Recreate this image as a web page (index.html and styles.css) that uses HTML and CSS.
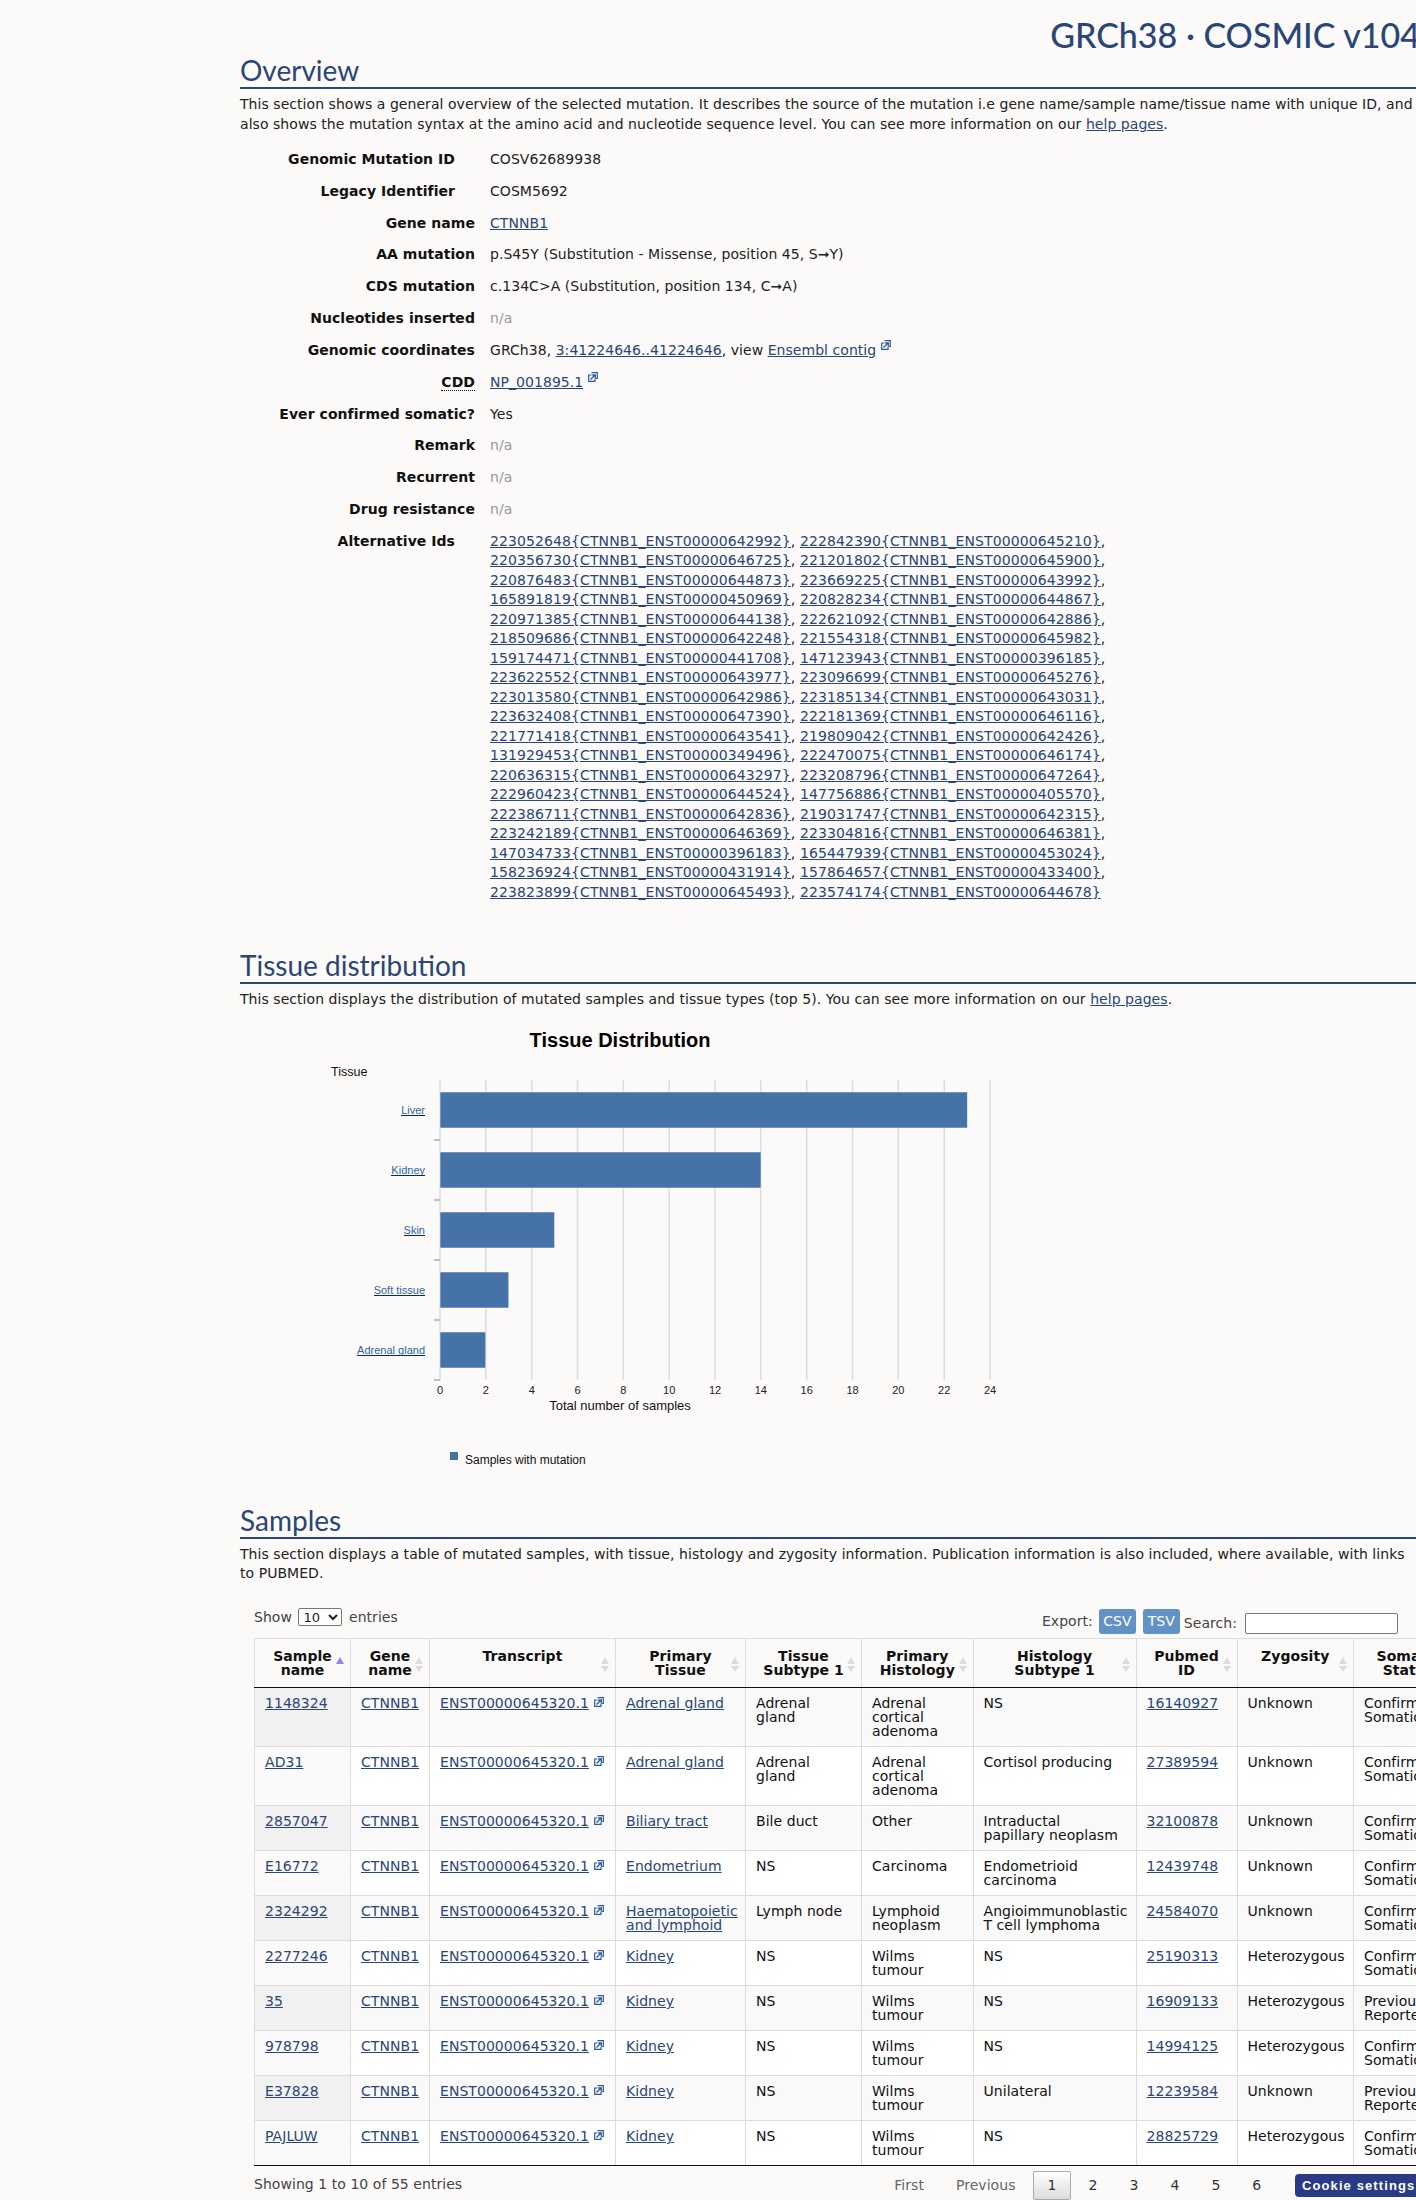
FILE: index.html
```html
<!DOCTYPE html>
<html lang="en">
<head>
<meta charset="utf-8">
<title>CTNNB1 p.S45Y - COSMIC</title>
<link rel="stylesheet" href="styles.css">
</head>
<body>
<svg class="defs" width="0" height="0" aria-hidden="true">
  <symbol id="ext" viewBox="0 0 10 10">
    <path d="M3.500 3H.7v6.300H7V6.500" fill="none" stroke="#2a5a9a" stroke-width="1.200"/>
    <path d="M3.500 .7h5.800v5.800H7.500" fill="none" stroke="#2a5a9a" stroke-width="1.200"/>
    <path d="M2.500 7.500 6.500 3.500M4.300 3h3v3" fill="none" stroke="#2a5a9a" stroke-width="1.300"/>
  </symbol>
</svg>
<main class="page">
  <h1 class="build">GRCh38 · COSMIC v104</h1>

  <section>
    <h2>Overview</h2>
    <p>This section shows a general overview of the selected mutation. It describes the source of the mutation i.e gene name/sample name/tissue name with unique ID, and<br>also shows the mutation syntax at the amino acid and nucleotide sequence level. You can see more information on our <a href="#">help pages</a>.</p>
    <dl class="facts">
      <dt class="inset">Genomic Mutation ID</dt><dd>COSV62689938</dd>
      <dt class="inset">Legacy Identifier</dt><dd>COSM5692</dd>
      <dt>Gene name</dt><dd><a href="#">CTNNB1</a></dd>
      <dt>AA mutation</dt><dd>p.S45Y (Substitution - Missense, position 45, S➞Y)</dd>
      <dt>CDS mutation</dt><dd>c.134C&gt;A (Substitution, position 134, C➞A)</dd>
      <dt>Nucleotides inserted</dt><dd class="na">n/a</dd>
      <dt>Genomic coordinates</dt><dd>GRCh38, <a href="#">3:41224646..41224646</a>, view <a href="#">Ensembl contig</a><svg class="ext up"><use href="#ext"/></svg></dd>
      <dt><abbr class="dotted">CDD</abbr></dt><dd><a href="#">NP_001895.1</a><svg class="ext up"><use href="#ext"/></svg></dd>
      <dt>Ever confirmed somatic?</dt><dd>Yes</dd>
      <dt>Remark</dt><dd class="na">n/a</dd>
      <dt>Recurrent</dt><dd class="na">n/a</dd>
      <dt>Drug resistance</dt><dd class="na">n/a</dd>
      <dt class="inset">Alternative Ids</dt>
      <dd class="alts"><a href="#">223052648{CTNNB1_ENST00000642992}</a>, <a href="#">222842390{CTNNB1_ENST00000645210}</a>, <a href="#">220356730{CTNNB1_ENST00000646725}</a>, <a href="#">221201802{CTNNB1_ENST00000645900}</a>, <a href="#">220876483{CTNNB1_ENST00000644873}</a>, <a href="#">223669225{CTNNB1_ENST00000643992}</a>, <a href="#">165891819{CTNNB1_ENST00000450969}</a>, <a href="#">220828234{CTNNB1_ENST00000644867}</a>, <a href="#">220971385{CTNNB1_ENST00000644138}</a>, <a href="#">222621092{CTNNB1_ENST00000642886}</a>, <a href="#">218509686{CTNNB1_ENST00000642248}</a>, <a href="#">221554318{CTNNB1_ENST00000645982}</a>, <a href="#">159174471{CTNNB1_ENST00000441708}</a>, <a href="#">147123943{CTNNB1_ENST00000396185}</a>, <a href="#">223622552{CTNNB1_ENST00000643977}</a>, <a href="#">223096699{CTNNB1_ENST00000645276}</a>, <a href="#">223013580{CTNNB1_ENST00000642986}</a>, <a href="#">223185134{CTNNB1_ENST00000643031}</a>, <a href="#">223632408{CTNNB1_ENST00000647390}</a>, <a href="#">222181369{CTNNB1_ENST00000646116}</a>, <a href="#">221771418{CTNNB1_ENST00000643541}</a>, <a href="#">219809042{CTNNB1_ENST00000642426}</a>, <a href="#">131929453{CTNNB1_ENST00000349496}</a>, <a href="#">222470075{CTNNB1_ENST00000646174}</a>, <a href="#">220636315{CTNNB1_ENST00000643297}</a>, <a href="#">223208796{CTNNB1_ENST00000647264}</a>, <a href="#">222960423{CTNNB1_ENST00000644524}</a>, <a href="#">147756886{CTNNB1_ENST00000405570}</a>, <a href="#">222386711{CTNNB1_ENST00000642836}</a>, <a href="#">219031747{CTNNB1_ENST00000642315}</a>, <a href="#">223242189{CTNNB1_ENST00000646369}</a>, <a href="#">223304816{CTNNB1_ENST00000646381}</a>, <a href="#">147034733{CTNNB1_ENST00000396183}</a>, <a href="#">165447939{CTNNB1_ENST00000453024}</a>, <a href="#">158236924{CTNNB1_ENST00000431914}</a>, <a href="#">157864657{CTNNB1_ENST00000433400}</a>, <a href="#">223823899{CTNNB1_ENST00000645493}</a>, <a href="#">223574174{CTNNB1_ENST00000644678}</a></dd>
    </dl>
  </section>

  <section class="tissue">
    <h2>Tissue distribution</h2>
    <p>This section displays the distribution of mutated samples and tissue types (top 5). You can see more information on our <a href="#">help pages</a>.</p>
    <svg class="chart" viewBox="0 0 800 470" width="800" height="470">
      <text class="c-title" x="380" y="37" text-anchor="middle">Tissue Distribution</text>
      <text class="c-label" x="91" y="66">Tissue</text>
      <g class="c-grid">
        <path d="M200 70v300M245.800 70v300M291.700 70v300M337.500 70v300M383.300 70v300M429.200 70v300M475 70v300M520.800 70v300M566.700 70v300M612.500 70v300M658.300 70v300M704.200 70v300M750 70v300"/>
      </g>
      <path class="c-tick" d="M194 130h6M194 190h6M194 250h6M194 310h6M194 370h6"/>
      <g class="c-bars">
        <rect x="200" y="82" width="527.400" height="36"/>
        <rect x="200" y="142" width="321" height="36"/>
        <rect x="200" y="202" width="114.600" height="36"/>
        <rect x="200" y="262" width="68.800" height="36"/>
        <rect x="200" y="322" width="45.800" height="36"/>
      </g>
      <g class="c-cat">
        <a href="#"><text x="185" y="104" text-anchor="end">Liver</text></a>
        <a href="#"><text x="185" y="164" text-anchor="end">Kidney</text></a>
        <a href="#"><text x="185" y="224" text-anchor="end">Skin</text></a>
        <a href="#"><text x="185" y="284" text-anchor="end">Soft tissue</text></a>
        <a href="#"><text x="185" y="344" text-anchor="end">Adrenal gland</text></a>
      </g>
      <path class="c-under" d="M161 105.500h24M151 165.500h34M164 225.500h21M134 285.500h51M117 345.500h68"/>
      <g class="c-num" text-anchor="middle">
        <text x="200" y="384">0</text><text x="245.800" y="384">2</text><text x="291.700" y="384">4</text><text x="337.500" y="384">6</text><text x="383.300" y="384">8</text><text x="429.200" y="384">10</text><text x="475" y="384">12</text><text x="520.800" y="384">14</text><text x="566.700" y="384">16</text><text x="612.500" y="384">18</text><text x="658.300" y="384">20</text><text x="704.200" y="384">22</text><text x="750" y="384">24</text>
      </g>
      <text class="c-axis" x="380" y="400" text-anchor="middle">Total number of samples</text>
      <rect class="c-key" x="210" y="442" width="8" height="8"/>
      <text class="c-legend" x="225" y="454">Samples with mutation</text>
    </svg>
  </section>

  <section class="samples">
    <h2>Samples</h2>
    <p>This section displays a table of mutated samples, with tissue, histology and zygosity information. Publication information is also included, where available, with links<br>to PUBMED.</p>
    <div class="dt">
      <div class="dt-top">
        <label class="show">Show <select class="len"><option>10</option><option>25</option><option>50</option></select> entries</label>
        <div class="tools">
          <span class="export">Export:</span>
          <a class="btn" href="#">CSV</a>
          <a class="btn" href="#">TSV</a>
          <label class="search">Search: <input class="find" type="search"></label>
        </div>
      </div>
      <table>
        <colgroup><col class="w1"><col class="w2"><col class="w3"><col class="w4"><col class="w5"><col class="w6"><col class="w7"><col class="w8"><col class="w9"><col class="w10"></colgroup>
        <thead>
          <tr>
            <th class="sorted">Sample<br>name</th><th>Gene<br>name</th><th>Transcript</th><th>Primary<br>Tissue</th><th>Tissue<br>Subtype 1</th><th>Primary<br>Histology</th><th>Histology<br>Subtype 1</th><th>Pubmed<br>ID</th><th>Zygosity</th><th>Somatic<br>Status</th>
          </tr>
        </thead>
        <tbody>
          <tr><td><a href="#">1148324</a></td><td><a href="#">CTNNB1</a></td><td><a href="#">ENST00000645320.1</a><svg class="ext"><use href="#ext"/></svg></td><td><a href="#">Adrenal gland</a></td><td>Adrenal gland</td><td>Adrenal cortical adenoma</td><td>NS</td><td><a href="#">16140927</a></td><td>Unknown</td><td>Confirmed Somatic</td></tr>
          <tr><td><a href="#">AD31</a></td><td><a href="#">CTNNB1</a></td><td><a href="#">ENST00000645320.1</a><svg class="ext"><use href="#ext"/></svg></td><td><a href="#">Adrenal gland</a></td><td>Adrenal gland</td><td>Adrenal cortical adenoma</td><td>Cortisol producing</td><td><a href="#">27389594</a></td><td>Unknown</td><td>Confirmed Somatic</td></tr>
          <tr><td><a href="#">2857047</a></td><td><a href="#">CTNNB1</a></td><td><a href="#">ENST00000645320.1</a><svg class="ext"><use href="#ext"/></svg></td><td><a href="#">Biliary tract</a></td><td>Bile duct</td><td>Other</td><td>Intraductal papillary neoplasm</td><td><a href="#">32100878</a></td><td>Unknown</td><td>Confirmed Somatic</td></tr>
          <tr><td><a href="#">E16772</a></td><td><a href="#">CTNNB1</a></td><td><a href="#">ENST00000645320.1</a><svg class="ext"><use href="#ext"/></svg></td><td><a href="#">Endometrium</a></td><td>NS</td><td>Carcinoma</td><td>Endometrioid carcinoma</td><td><a href="#">12439748</a></td><td>Unknown</td><td>Confirmed Somatic</td></tr>
          <tr><td><a href="#">2324292</a></td><td><a href="#">CTNNB1</a></td><td><a href="#">ENST00000645320.1</a><svg class="ext"><use href="#ext"/></svg></td><td><a href="#">Haematopoietic and lymphoid</a></td><td>Lymph node</td><td>Lymphoid neoplasm</td><td>Angioimmunoblastic T cell lymphoma</td><td><a href="#">24584070</a></td><td>Unknown</td><td>Confirmed Somatic</td></tr>
          <tr><td><a href="#">2277246</a></td><td><a href="#">CTNNB1</a></td><td><a href="#">ENST00000645320.1</a><svg class="ext"><use href="#ext"/></svg></td><td><a href="#">Kidney</a></td><td>NS</td><td>Wilms tumour</td><td>NS</td><td><a href="#">25190313</a></td><td>Heterozygous</td><td>Confirmed Somatic</td></tr>
          <tr><td><a href="#">35</a></td><td><a href="#">CTNNB1</a></td><td><a href="#">ENST00000645320.1</a><svg class="ext"><use href="#ext"/></svg></td><td><a href="#">Kidney</a></td><td>NS</td><td>Wilms tumour</td><td>NS</td><td><a href="#">16909133</a></td><td>Heterozygous</td><td>Previously Reported</td></tr>
          <tr><td><a href="#">978798</a></td><td><a href="#">CTNNB1</a></td><td><a href="#">ENST00000645320.1</a><svg class="ext"><use href="#ext"/></svg></td><td><a href="#">Kidney</a></td><td>NS</td><td>Wilms tumour</td><td>NS</td><td><a href="#">14994125</a></td><td>Heterozygous</td><td>Confirmed Somatic</td></tr>
          <tr><td><a href="#">E37828</a></td><td><a href="#">CTNNB1</a></td><td><a href="#">ENST00000645320.1</a><svg class="ext"><use href="#ext"/></svg></td><td><a href="#">Kidney</a></td><td>NS</td><td>Wilms tumour</td><td>Unilateral</td><td><a href="#">12239584</a></td><td>Unknown</td><td>Previously Reported</td></tr>
          <tr><td><a href="#">PAJLUW</a></td><td><a href="#">CTNNB1</a></td><td><a href="#">ENST00000645320.1</a><svg class="ext"><use href="#ext"/></svg></td><td><a href="#">Kidney</a></td><td>NS</td><td>Wilms tumour</td><td>NS</td><td><a href="#">28825729</a></td><td>Heterozygous</td><td>Confirmed Somatic</td></tr>
        </tbody>
      </table>
      <div class="dt-bottom">
        <div class="info">Showing 1 to 10 of 55 entries</div>
        <nav class="paging">
          <a class="pg off" href="#">First</a><a class="pg off" href="#">Previous</a><a class="pg cur" href="#">1</a><a class="pg" href="#">2</a><a class="pg" href="#">3</a><a class="pg" href="#">4</a><a class="pg" href="#">5</a><a class="pg" href="#">6</a>
        </nav>
      </div>
    </div>
  </section>
</main>
<button class="cookie" type="button">Cookie settings</button>
</body>
</html>
```

FILE: styles.css
```css
html {
  height: 2200px;
  overflow: hidden;
  background: #fbfaf8;
}
body {
  margin: 0;
  width: 1416px;
  height: 2200px;
  overflow: hidden;
  position: relative;
  font-family: "DejaVu Sans", Verdana, sans-serif;
  font-size: 14px;
  letter-spacing: .05px;
  line-height: 19.5px;
  color: #222;
  background: #fbfaf8;
}
a { color: #2a4677; }
.defs { position: absolute; }
.page {
  margin-left: 240px;
  width: 1180px;
}
.build {
  margin: 0;
  height: 53px;
  padding-top: 15px;
  box-sizing: border-box;
  font-family: Lato, sans-serif;
  font-weight: 500;
  font-size: 34px;
  letter-spacing: 0;
  line-height: 40px;
  text-align: right;
  color: #2a4677;
  white-space: nowrap;
}
h2 {
  margin: 0;
  height: 34px;
  border-bottom: 2px solid #2a4677;
  font-family: Lato, sans-serif;
  font-weight: 400;
  font-size: 28px;
  letter-spacing: 0;
  line-height: 34px;
  color: #2a4677;
}
p {
  margin: 6px 0 0;
  white-space: nowrap;
}
.facts {
  margin: 16px 0 0;
  display: grid;
  grid-template-columns: 235px 1fr;
  column-gap: 15px;
  row-gap: 12.33px;
}
.facts dt {
  font-weight: 700;
  text-align: right;
  color: #111;
}
.facts dt.inset { padding-right: 20px; }
.facts dd { margin: 0; }
.dotted { border-bottom: 1px dotted #111; text-decoration: none; }
.na { color: #999; }
.alts { width: 640px; letter-spacing: .1px; }
.ext {
  width: 10px;
  height: 10px;
  margin-left: 5px;
  vertical-align: 1px;
}
.ext.up { vertical-align: 5px; margin-top: -6px; }
.tissue { margin-top: 46px; }
.chart { display: block; }
.samples { margin-top: 23px; }
.c-title { font: 700 20px "Liberation Sans", Arial, sans-serif; letter-spacing: 0; fill: #000; }
.c-label { font: 12.500px "Liberation Sans", Arial, sans-serif; letter-spacing: 0; fill: #111; }
.c-axis { font: 13px "Liberation Sans", Arial, sans-serif; letter-spacing: 0; fill: #111; }
.c-legend { font: 12px "Liberation Sans", Arial, sans-serif; letter-spacing: 0; fill: #111; }
.c-grid path { stroke: #dcdcdc; stroke-width: 1.500; fill: none; }
.c-tick { stroke: #c0c0c0; stroke-width: 2; fill: none; }
.c-bars rect { fill: #4572a7; stroke: #fff; stroke-width: .5; }
.c-cat text { font: 11px "Liberation Sans", Arial, sans-serif; letter-spacing: 0; fill: #2b67a7; }
.c-under { stroke: #0c2a50; stroke-width: 1; fill: none; }
.c-num text { font: 11px "Liberation Sans", Arial, sans-serif; letter-spacing: 0; fill: #222; }
.c-key { fill: #4572a7; }
.dt { margin: 21px 0 0 14px; width: 1144px; }
.dt-top {
  display: flex;
  justify-content: space-between;
  align-items: flex-end;
  height: 33px;
  color: #444;
}
.show { align-self: flex-start; margin-top: 3px; }
.len {
  width: 44px;
  height: 18px;
  margin: 0 2px;
  font: 13px "DejaVu Sans", sans-serif;
  padding: 0;
  background: #fff;
  border: 1px solid #777;
  border-radius: 2px;
  color: #222;
}
.tools { display: flex; align-items: flex-end; padding-bottom: 4px; }
.export { margin-right: 6px; align-self: center; }
.btn {
  width: 37px;
  height: 25px;
  margin-right: 7px;
  background: #6292c4;
  border-radius: 3px;
  color: #fff;
  text-align: center;
  line-height: 25px;
  text-decoration: none;
}
.btn + .btn { margin-right: 4px; }
.search { display: flex; align-items: center; gap: 8px; height: 21px; }
.find {
  width: 153px;
  height: 21px;
  box-sizing: border-box;
  background: #fff;
  border: 1px solid #777;
  border-radius: 2px;
  padding: 0 4px;
}
table {
  border-collapse: collapse;
  table-layout: fixed;
  width: 1209px;
  line-height: 14px;
  color: #111;
}
.w1 { width: 96px; }
.w2 { width: 79px; }
.w3 { width: 186px; }
.w4 { width: 130px; }
.w5 { width: 116px; }
.w6 { width: 111.500px; }
.w7 { width: 163px; }
.w8 { width: 101px; }
.w9 { width: 116.500px; }
.w10 { width: 110px; }
th {
  position: relative;
  padding: 10px 10px 10px;
  border: 1px solid #dcdcdc;
  border-bottom: 1px solid #111;
  font-weight: 700;
  text-align: center;
  vertical-align: top;
}
th::before, th::after {
  content: "";
  position: absolute;
  right: 6px;
  width: 0;
  height: 0;
  border-left: 4px solid transparent;
  border-right: 4px solid transparent;
}
th::before { top: 18px; border-bottom: 7px solid #dcdcdc; }
th::after { top: 27px; border-top: 6px solid #dcdcdc; }
th.sorted::before { border-bottom-color: #8a8ae6; }
th.sorted::after { display: none; }
td {
  padding: 8px 10px 8px;
  border: 1px solid #dcdcdc;
  vertical-align: top;
  background: #fff;
}
tbody tr:nth-child(odd) td { background: #f9f9f9; }
tbody td:first-child { background: #fafafa; }
tbody tr:nth-child(odd) td:first-child { background: #f1f1f1; }
tbody tr:last-child td { border-bottom: 1px solid #111; }
.dt-bottom {
  display: flex;
  align-items: flex-start;
  color: #444;
  white-space: nowrap;
}
.info { padding-top: 9px; }
.paging { display: flex; margin: 5px 0 0 417px; }
.pg {
  padding: 3.750px 14px;
  margin-right: 2px;
  border: 1px solid transparent;
  border-radius: 2px;
  color: #333;
  text-decoration: none;
}
.pg.off { color: #666; }
.pg.cur {
  border-color: #aaa;
  background: linear-gradient(#fff, #dcdcdc);
}
.cookie {
  position: absolute;
  left: 1295px;
  top: 2174px;
  width: 140px;
  height: 23px;
  padding: 0 0 0 7px;
  border: 0;
  border-radius: 4px;
  background: #2a3a85;
  color: #fff;
  font: 700 13px "Liberation Sans", Arial, sans-serif;
  letter-spacing: 1.100px;
  text-align: left;
}
```
